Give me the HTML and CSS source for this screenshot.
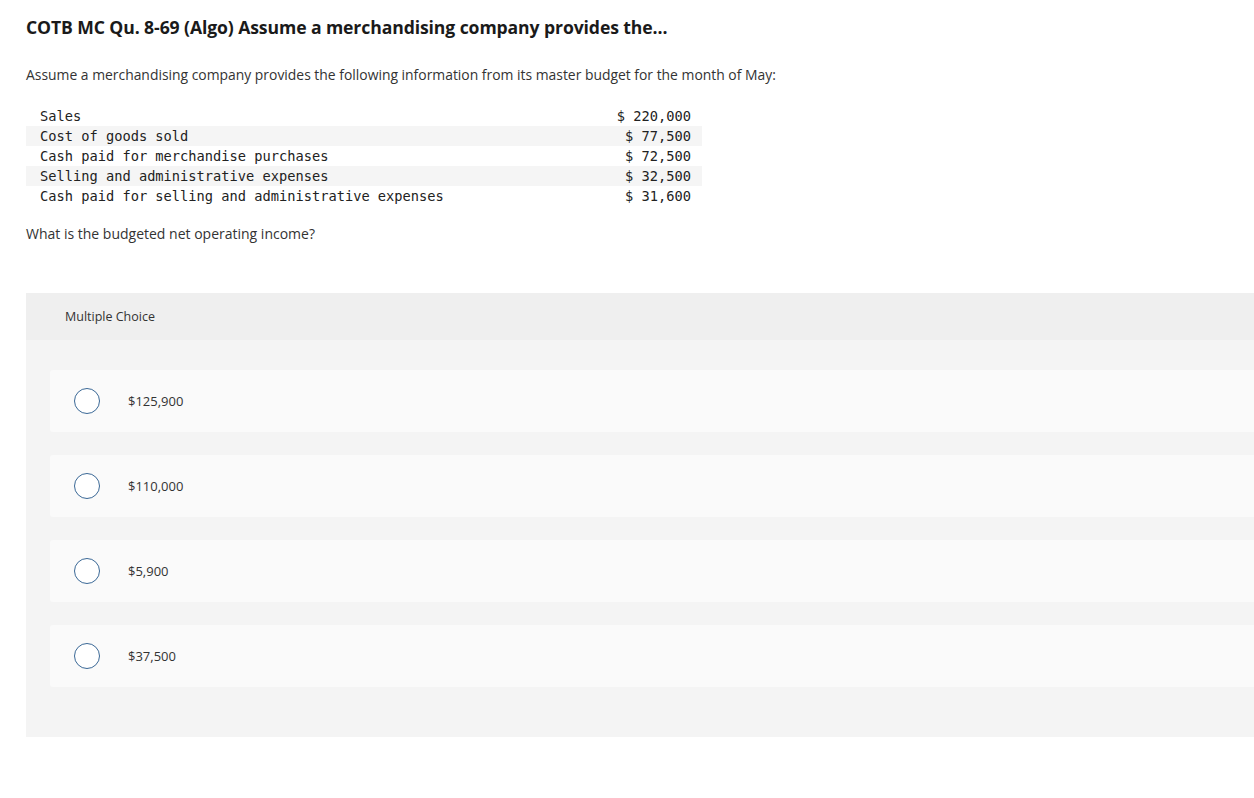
FILE: index.html
```html
<!DOCTYPE html>
<html>
<head>
<meta charset="utf-8">
<link rel="stylesheet" href="styles.css">
</head>
<body>
<div class="page">
  <h1 class="title">COTB MC Qu. 8-69 (Algo) Assume a merchandising company provides the...</h1>
  <p class="intro">Assume a merchandising company provides the following information from its master budget for the month of May:</p>
  <table class="data">
    <tr><td>Sales</td><td class="num">$ 220,000</td></tr>
    <tr class="alt"><td>Cost of goods sold</td><td class="num">$ 77,500</td></tr>
    <tr><td>Cash paid for merchandise purchases</td><td class="num">$ 72,500</td></tr>
    <tr class="alt"><td>Selling and administrative expenses</td><td class="num">$ 32,500</td></tr>
    <tr><td>Cash paid for selling and administrative expenses</td><td class="num">$ 31,600</td></tr>
  </table>
  <p class="question">What is the budgeted net operating income?</p>
  <div class="mc">
    <div class="mc-head">Multiple Choice</div>
    <div class="mc-body">
      <div class="opt"><span class="radio"></span><span class="label">$125,900</span></div>
      <div class="opt"><span class="radio"></span><span class="label">$110,000</span></div>
      <div class="opt"><span class="radio"></span><span class="label">$5,900</span></div>
      <div class="opt"><span class="radio"></span><span class="label">$37,500</span></div>
    </div>
  </div>
</div>
</body>
</html>
```
FILE: styles.css
```css
html, body { margin: 0; padding: 0; background: #fff; }
body { font-family: "Open Sans", "Lato", sans-serif; color: #222; overflow: hidden; }
.page { padding: 15px 0 0 26px; width: 1228px; }
.title { font-size: 17.6px; font-weight: 700; margin: 0; line-height: 24px; color: #1a1a1a; letter-spacing: -0.1px; }
.intro { font-size: 13.9px; margin: 26px 0 0; line-height: 20px; color: #333; }
.data { border-collapse: collapse; width: 676px; margin-top: 21px; font-family: "DejaVu Sans Mono", monospace; font-size: 13.7px; color: #222; }
.data td { height: 20px; padding: 0 0 0 14px; line-height: 20px; white-space: nowrap; }
.data td.num { text-align: right; padding: 0 11px 0 0; }
.data tr.alt td { background: #f5f5f5; }
.question { font-size: 14px; margin: 18px 0 0; line-height: 20px; color: #333; }
.mc { margin-top: 49px; background: #f4f4f4; }
.mc-head { background: #efefef; height: 47px; display: flex; align-items: center; padding-left: 39px; font-size: 12.5px; color: #333; }
.mc-body { padding: 30px 0 50px 24px; display: flex; flex-direction: column; gap: 23px; }
.opt { height: 62px; background: #fafafa; border-radius: 3px 0 0 3px; display: flex; align-items: center; padding-left: 24px; }
.radio { border: 1.5px solid #3a6896; border-radius: 50%; box-sizing: border-box; width: 26px; height: 26px; background: #fff; flex: none; }
.label { margin-left: 28px; font-size: 13px; color: #333; }
```
